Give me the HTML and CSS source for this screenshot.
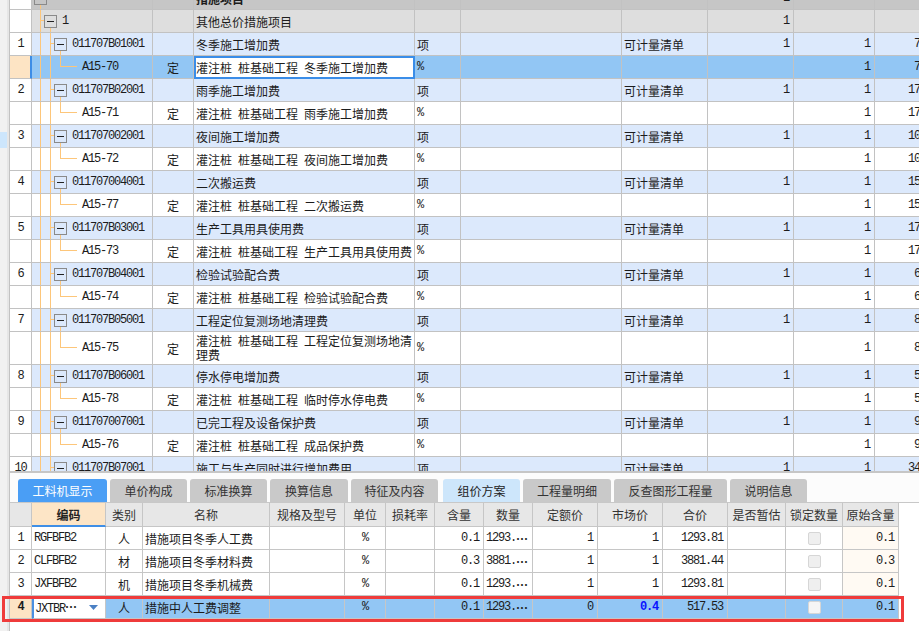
FILE: index.html
```html
<!DOCTYPE html>
<html lang="zh-CN">
<head>
<meta charset="utf-8">
<title>措施项目</title>
<link rel="stylesheet" href="styles.css">
</head>
<body>
<div class="app">
  <div class="strip"><div class="strip-mark"></div></div>
  <div class="main">
    <div class="top">
      <div class="rows">
        <div class="tr root"><div class="rn"></div><div class="tree t-root"><span class="bx"></span></div><div></div><div class="n b">措施项目</div><div></div><div></div><div></div><div class="r m">1</div><div></div><div></div></div>
        <div class="tr grp"><div class="rn"></div><div class="tree t-grp"><span class="bx"></span><span class="m tx">1</span></div><div></div><div class="n">其他总价措施项目</div><div></div><div></div><div></div><div class="r m">1</div><div></div><div></div></div>

        <div class="tr code"><div class="rn m">1</div><div class="tree t-code"><span class="bx"></span><span class="m tx">011707B01001</span></div><div></div><div class="n">冬季施工增加费</div><div class="u">项</div><div></div><div class="n">可计量清单</div><div class="r m">1</div><div class="r m">1</div><div class="r m">776.29</div></div>
        <div class="tr item sel"><div class="rn"></div><div class="tree t-item"><span class="m tx">A15-70</span></div><div class="c">定</div><div class="n edit">灌注桩 桩基础工程 冬季施工增加费</div><div class="u m">%</div><div></div><div></div><div></div><div class="r m">1</div><div class="r m">776.29</div></div>

        <div class="tr code"><div class="rn m">2</div><div class="tree t-code"><span class="bx"></span><span class="m tx">011707B02001</span></div><div></div><div class="n">雨季施工增加费</div><div class="u">项</div><div></div><div class="n">可计量清单</div><div class="r m">1</div><div class="r m">1</div><div class="r m">1746.88</div></div>
        <div class="tr item"><div class="rn"></div><div class="tree t-item"><span class="m tx">A15-71</span></div><div class="c">定</div><div class="n">灌注桩 桩基础工程 雨季施工增加费</div><div class="u m">%</div><div></div><div></div><div></div><div class="r m">1</div><div class="r m">1746.88</div></div>

        <div class="tr code"><div class="rn m">3</div><div class="tree t-code"><span class="bx"></span><span class="m tx">011707002001</span></div><div></div><div class="n">夜间施工增加费</div><div class="u">项</div><div></div><div class="n">可计量清单</div><div class="r m">1</div><div class="r m">1</div><div class="r m">1035.17</div></div>
        <div class="tr item"><div class="rn"></div><div class="tree t-item"><span class="m tx">A15-72</span></div><div class="c">定</div><div class="n">灌注桩 桩基础工程 夜间施工增加费</div><div class="u m">%</div><div></div><div></div><div></div><div class="r m">1</div><div class="r m">1035.17</div></div>

        <div class="tr code"><div class="rn m">4</div><div class="tree t-code"><span class="bx"></span><span class="m tx">011707004001</span></div><div></div><div class="n">二次搬运费</div><div class="u">项</div><div></div><div class="n">可计量清单</div><div class="r m">1</div><div class="r m">1</div><div class="r m">1552.68</div></div>
        <div class="tr item"><div class="rn"></div><div class="tree t-item"><span class="m tx">A15-77</span></div><div class="c">定</div><div class="n">灌注桩 桩基础工程 二次搬运费</div><div class="u m">%</div><div></div><div></div><div></div><div class="r m">1</div><div class="r m">1552.68</div></div>

        <div class="tr code"><div class="rn m">5</div><div class="tree t-code"><span class="bx"></span><span class="m tx">011707B03001</span></div><div></div><div class="n">生产工具用具使用费</div><div class="u">项</div><div></div><div class="n">可计量清单</div><div class="r m">1</div><div class="r m">1</div><div class="r m">1746.88</div></div>
        <div class="tr item"><div class="rn"></div><div class="tree t-item"><span class="m tx">A15-73</span></div><div class="c">定</div><div class="n">灌注桩 桩基础工程 生产工具用具使用费</div><div class="u m">%</div><div></div><div></div><div></div><div class="r m">1</div><div class="r m">1746.88</div></div>

        <div class="tr code"><div class="rn m">6</div><div class="tree t-code"><span class="bx"></span><span class="m tx">011707B04001</span></div><div></div><div class="n">检验试验配合费</div><div class="u">项</div><div></div><div class="n">可计量清单</div><div class="r m">1</div><div class="r m">1</div><div class="r m">646.91</div></div>
        <div class="tr item"><div class="rn"></div><div class="tree t-item"><span class="m tx">A15-74</span></div><div class="c">定</div><div class="n">灌注桩 桩基础工程 检验试验配合费</div><div class="u m">%</div><div></div><div></div><div></div><div class="r m">1</div><div class="r m">646.91</div></div>

        <div class="tr code"><div class="rn m">7</div><div class="tree t-code"><span class="bx"></span><span class="m tx">011707B05001</span></div><div></div><div class="n">工程定位复测场地清理费</div><div class="u">项</div><div></div><div class="n">可计量清单</div><div class="r m">1</div><div class="r m">1</div><div class="r m">862.35</div></div>
        <div class="tr item tall"><div class="rn"></div><div class="tree t-item t-tall"><span class="m tx">A15-75</span></div><div class="c">定</div><div class="n wrap"><span>灌注桩 桩基础工程 工程定位复测场地清理费</span></div><div class="u m">%</div><div></div><div></div><div></div><div class="r m">1</div><div class="r m">862.35</div></div>

        <div class="tr code"><div class="rn m">8</div><div class="tree t-code"><span class="bx"></span><span class="m tx">011707B06001</span></div><div></div><div class="n">停水停电增加费</div><div class="u">项</div><div></div><div class="n">可计量清单</div><div class="r m">1</div><div class="r m">1</div><div class="r m">517.53</div></div>
        <div class="tr item"><div class="rn"></div><div class="tree t-item"><span class="m tx">A15-78</span></div><div class="c">定</div><div class="n">灌注桩 桩基础工程 临时停水停电费</div><div class="u m">%</div><div></div><div></div><div></div><div class="r m">1</div><div class="r m">517.53</div></div>

        <div class="tr code"><div class="rn m">9</div><div class="tree t-code"><span class="bx"></span><span class="m tx">011707007001</span></div><div></div><div class="n">已完工程及设备保护费</div><div class="u">项</div><div></div><div class="n">可计量清单</div><div class="r m">1</div><div class="r m">1</div><div class="r m">905.72</div></div>
        <div class="tr item"><div class="rn"></div><div class="tree t-item"><span class="m tx">A15-76</span></div><div class="c">定</div><div class="n">灌注桩 桩基础工程 成品保护费</div><div class="u m">%</div><div></div><div></div><div></div><div class="r m">1</div><div class="r m">905.72</div></div>

        <div class="tr code"><div class="rn m">10</div><div class="tree t-code"><span class="bx"></span><span class="m tx">011707B07001</span></div><div></div><div class="n">施工与生产同时进行增加费用</div><div class="u">项</div><div></div><div class="n">可计量清单</div><div class="r m">1</div><div class="r m">1</div><div class="r m">3450.20</div></div>
      </div>
    </div>
    <div class="splitter"></div>
    <div class="tabbar">
      <div class="tab on w89">工料机显示</div>
      <div class="tab w77">单价构成</div>
      <div class="tab w77">标准换算</div>
      <div class="tab w78">换算信息</div>
      <div class="tab w87">特征及内容</div>
      <div class="tab lite w77 gap">组价方案</div>
      <div class="tab w88">工程量明细</div>
      <div class="tab w113">反查图形工程量</div>
      <div class="tab w77">说明信息</div>
    </div>
    <div class="bgrid">
      <div class="bh"><div></div><div class="hsel">编码</div><div>类别</div><div>名称</div><div>规格及型号</div><div>单位</div><div>损耗率</div><div>含量</div><div>数量</div><div>定额价</div><div>市场价</div><div>合价</div><div>是否暂估</div><div>锁定数量</div><div>原始含量</div></div>
      <div class="br"><div class="c m rn">1</div><div class="m">RGFBFB2</div><div class="c">人</div><div>措施项目冬季人工费</div><div></div><div class="c m">%</div><div></div><div class="r m">0.1</div><div class="m">1293.<span class="el">…</span></div><div class="r m">1</div><div class="r m">1</div><div class="r m">1293.81</div><div></div><div class="c"><span class="cb"></span></div><div class="r m orig">0.1</div></div>
      <div class="br"><div class="c m rn">2</div><div class="m">CLFBFB2</div><div class="c">材</div><div>措施项目冬季材料费</div><div></div><div class="c m">%</div><div></div><div class="r m">0.3</div><div class="m">3881.<span class="el">…</span></div><div class="r m">1</div><div class="r m">1</div><div class="r m">3881.44</div><div></div><div class="c"><span class="cb"></span></div><div class="r m orig">0.3</div></div>
      <div class="br"><div class="c m rn">3</div><div class="m">JXFBFB2</div><div class="c">机</div><div>措施项目冬季机械费</div><div></div><div class="c m">%</div><div></div><div class="r m">0.1</div><div class="m">1293.<span class="el">…</span></div><div class="r m">1</div><div class="r m">1</div><div class="r m">1293.81</div><div></div><div class="c"><span class="cb"></span></div><div class="r m orig">0.1</div></div>
      <div class="br bsel"><div class="c m rn">4</div><div class="m code-edit"><span>JXTBR<span class="el">…</span></span><svg class="dd" width="9" height="5" viewBox="0 0 9 5"><path d="M0 0h9L4.5 5z" fill="#4b80c4"/></svg></div><div class="c">人</div><div>措施中人工费调整</div><div></div><div class="c m">%</div><div></div><div class="r m">0.1</div><div class="m">1293.<span class="el">…</span></div><div class="r m">0</div><div class="r m blue">0.4</div><div class="r m">517.53</div><div></div><div class="c"><span class="cb"></span></div><div class="r m orig">0.1</div></div>
    </div>
  </div>
</div>
<div class="redbox"></div>
</body>
</html>
```
FILE: styles.css
```css
* { box-sizing: border-box; margin: 0; padding: 0; }
html, body { width: 919px; height: 631px; overflow: hidden; background: #fff; }
body {
  font-family: "Noto Sans CJK SC", "Noto Sans", sans-serif;
  font-size: 12px;
  color: #1c1c1c;
  position: relative;
}
.app { display: flex; height: 631px; }

.strip {
  width: 9px; flex: none;
  background: #f1f1f1;
  box-shadow: inset -2px 0 #e6e6e6;
  display: flex; flex-direction: column;
}
.strip-mark { margin-top: 132px; height: 16px; width: 7px; background: #cde6fc; }

.main {
  flex: 1; min-width: 0;
  border-left: 1px solid #c2c2c2;
  display: flex; flex-direction: column;
}

.m { font-family: "Liberation Mono", monospace; font-size: 12px; letter-spacing: -1.2px; }
.b { font-weight: 700; }
.el { font-family: "Noto Sans CJK SC", sans-serif; letter-spacing: 0; font-weight: 700; }

/* ---------- top grid ---------- */
.top { height: 471px; overflow: hidden; flex: none; }
.rows { margin-top: -13px; }
.tr {
  --tl: #fdc67a;
  display: grid;
  grid-template-columns: 22px 121px 41px 221px 46px 161px 86px 86px 81px 80px;
  width: 945px;
  height: 23px;
}
.tr.tall { height: 33px; }
.tr > div {
  border-right: 1px solid #c2c2c2;
  border-bottom: 1px solid #c2c2c2;
  display: flex; align-items: center;
  padding: 0 2px;
  white-space: nowrap; overflow: hidden;
}
.tr > .rn { background: #fff; justify-content: center; padding: 0; }
.tr > .r { justify-content: flex-end; padding-right: 4px; }
.tr > .c { justify-content: center; }
.n { word-spacing: 3.3px; }
.tr > .wrap { white-space: normal; line-height: 14px; padding-right: 0; }

.root { background: #c6c6c6; }
.grp { background: #dedede; }
.code { background: #dce9fc; }
.item { background: #fff; }
.sel { background: #92c6f4; }
.sel > .rn { background: #fde4c4; border-right: 2px solid #3d8de6; }
.tr > .edit { background: #fff; outline: 2px solid #3a8de8; outline-offset: -2px; }

.tr > .tree { padding: 0; }
.bx {
  width: 13px; height: 13px; flex: none;
  border: 1px solid #8a8a8a;
  display: flex; align-items: center; justify-content: center;
}
.bx::before { content: ""; width: 7px; height: 1px; background: #222; }
.tx { margin-left: 5px; }

.t-root .bx { margin-left: 2px; }
.t-grp .bx { margin-left: 12px; }
.t-code .bx { margin-left: 22px; }
.t-item .tx { margin-left: 50px; }

.t-root {
  background: linear-gradient(var(--tl), var(--tl)) 8px 17px / 1px 100% no-repeat;
}
.t-grp {
  background:
    linear-gradient(var(--tl), var(--tl)) 8px 0 / 1px 100% no-repeat,
    linear-gradient(var(--tl), var(--tl)) 9px 10px / 3px 1px no-repeat,
    linear-gradient(var(--tl), var(--tl)) 18px 17px / 1px 100% no-repeat;
}
.t-code {
  background:
    linear-gradient(var(--tl), var(--tl)) 8px 0 / 1px 100% no-repeat,
    linear-gradient(var(--tl), var(--tl)) 18px 0 / 1px 100% no-repeat,
    linear-gradient(var(--tl), var(--tl)) 19px 10px / 3px 1px no-repeat,
    linear-gradient(var(--tl), var(--tl)) 28px 17px / 1px 100% no-repeat;
}
.t-item {
  background:
    linear-gradient(var(--tl), var(--tl)) 8px 0 / 1px 100% no-repeat,
    linear-gradient(var(--tl), var(--tl)) 18px 0 / 1px 100% no-repeat,
    linear-gradient(var(--tl), var(--tl)) 28px 0 / 1px 11px no-repeat,
    linear-gradient(var(--tl), var(--tl)) 28px 10px / 17px 1px no-repeat;
}
.t-item.t-tall {
  background:
    linear-gradient(var(--tl), var(--tl)) 8px 0 / 1px 100% no-repeat,
    linear-gradient(var(--tl), var(--tl)) 18px 0 / 1px 100% no-repeat,
    linear-gradient(var(--tl), var(--tl)) 28px 0 / 1px 16px no-repeat,
    linear-gradient(var(--tl), var(--tl)) 28px 15px / 17px 1px no-repeat;
}

.splitter { height: 2px; flex: none; background: #c6c6c6; }

/* ---------- tabs ---------- */
.tabbar {
  height: 30px; flex: none;
  display: flex; gap: 3px;
  padding: 6px 0 0 8px;
  background: #fcfcfc;
  border-bottom: 1px solid #c8c8c8;
}
.tab {
  height: 23px;
  border-radius: 3px 3px 0 0;
  background: #c9c9c9;
  color: #333;
  display: flex; align-items: center; justify-content: center;
}
.tab.on { background: #4a9ef5; color: #fff; }
.tab.lite { background: #cde6fb; color: #222; }
.tab.gap { margin-left: 2px; }
.w77 { width: 77px; } .w78 { width: 78px; } .w87 { width: 87px; }
.w88 { width: 88px; } .w89 { width: 89px; } .w113 { width: 113px; }

/* ---------- bottom grid ---------- */
.bh, .br {
  display: grid;
  grid-template-columns: 22px 74px 37px 127px 75px 41px 49px 49px 49px 65px 65px 65px 58px 57px 56px;
  width: 889px;
}
.bh { height: 24px; background: #e7e7e7; }
.br { height: 23px; background: #fff; }
.bh > div, .br > div {
  border-right: 1px solid #c6c6c6;
  border-bottom: 1px solid #c6c6c6;
  display: flex; align-items: center;
  padding: 0 2px;
  white-space: nowrap; overflow: hidden;
}
.bh > div { justify-content: center; color: #333; }
.bh > .hsel { background: #fde5c6; font-weight: 700; color: #222; border-bottom: 2px solid #3f8fe6; }
.br > .c { justify-content: center; }
.br > .r { justify-content: flex-end; padding-right: 4px; }
.br > .rn { padding: 0; }
.br > .orig { background: #fffaf3; }
.cb {
  width: 13px; height: 13px;
  border: 1px solid #d6d6d6; border-radius: 2px;
  background: #efefef;
}
.bsel { background: #92c6f4; }
.bsel > .rn { background: #fde4c4; font-weight: 700; }
.bsel > .orig { background: #92c6f4; }
.bsel .cb { background: #f5f5f5; }
.br > .code-edit { background: #fff; border-left: 2px solid #4a90e2; padding-left: 1px; }
.dd { margin-left: auto; margin-right: 5px; flex: none; }
.blue { color: #0a14ff; font-weight: 700; }

.redbox {
  position: absolute;
  left: 2px; top: 596px;
  width: 902px; height: 26px;
  border: 3px solid #ef3b3b;
  pointer-events: none;
}
```
